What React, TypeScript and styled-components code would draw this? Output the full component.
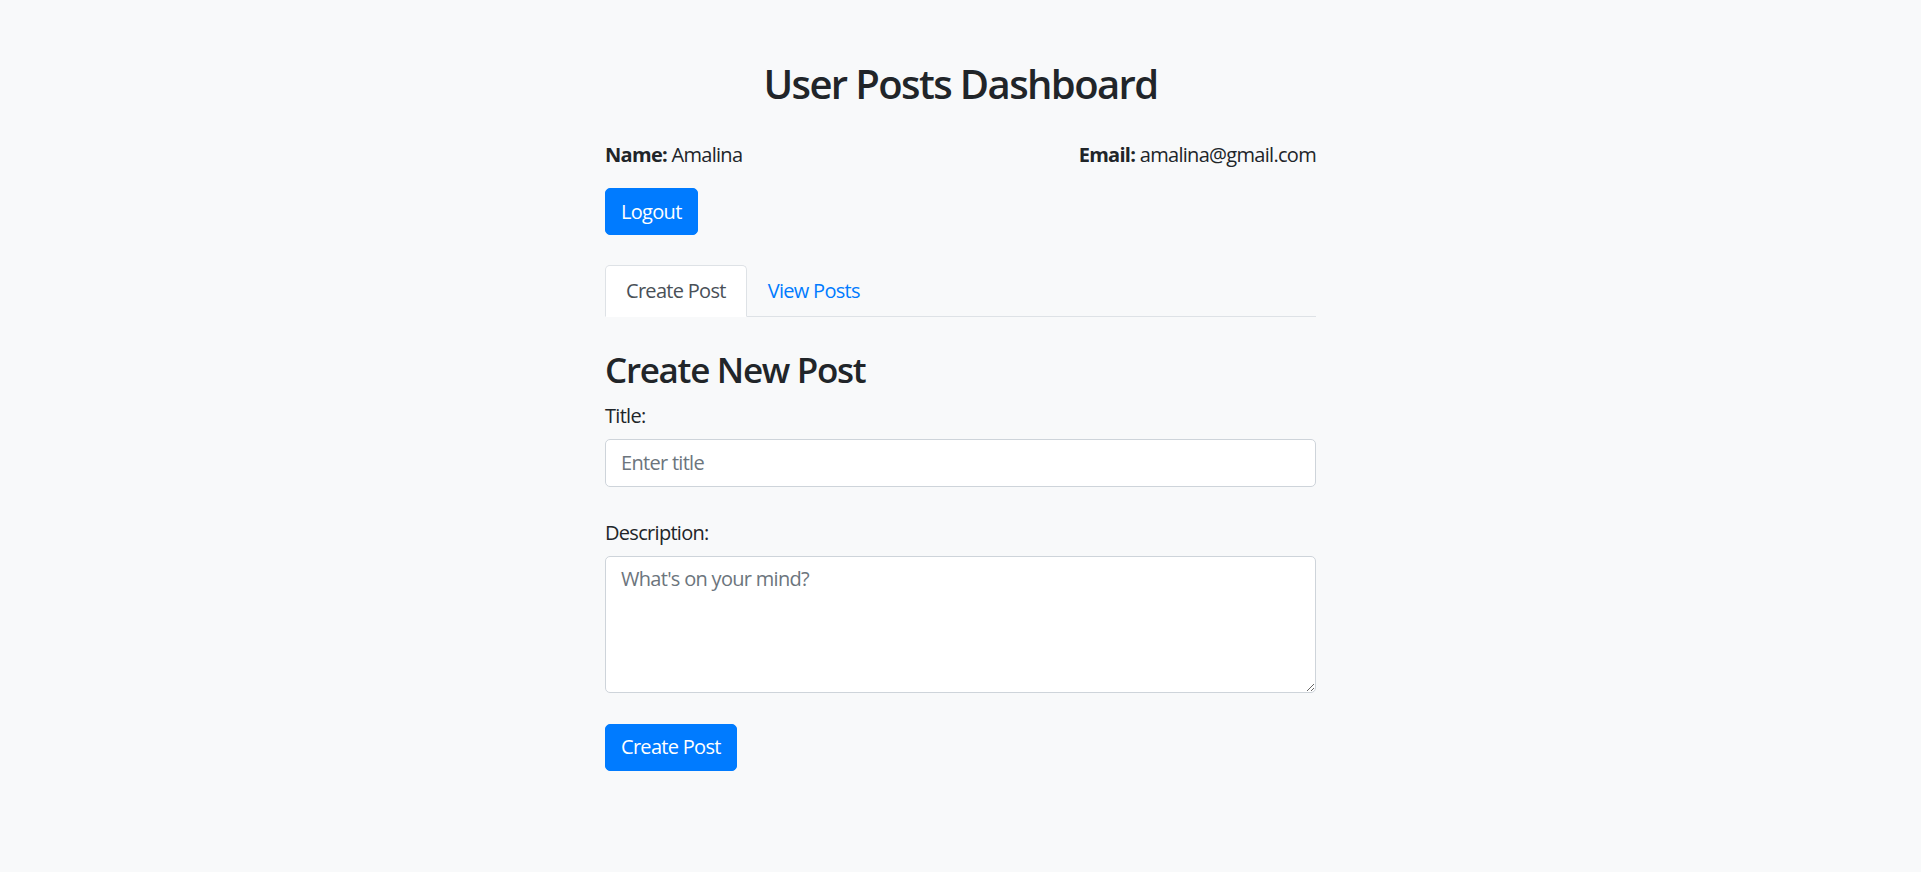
import React, { useState } from 'react'
import styled, { createGlobalStyle } from 'styled-components'

const GlobalStyle = createGlobalStyle`
  * {
    box-sizing: border-box;
  }
  body {
    margin: 0;
    background-color: #f8f9fa;
    color: #212529;
    font-family: 'Open Sans', 'Noto Sans', sans-serif;
    font-size: 20px;
    line-height: 1.5;
    letter-spacing: -0.035em;
  }
`

const Container = styled.div`
  width: 711px;
  margin: 0 auto;
  padding: 60px 0 40px;
`

const PageTitle = styled.h2`
  margin: 0 0 32px;
  text-align: center;
  font-size: 40px;
  font-weight: 600;
  line-height: 48px;
  letter-spacing: -0.04em;
`

const UserRow = styled.div`
  display: flex;
  justify-content: space-between;
  margin-bottom: 18px;
`

const Field = styled.span`
  white-space: nowrap;
`

const Strong = styled.strong`
  font-weight: 700;
`

const Button = styled.button`
  display: inline-block;
  padding: 7.5px 15px;
  border: 1px solid #007bff;
  border-radius: 5px;
  background-color: #007bff;
  color: #fff;
  font-family: inherit;
  font-size: 20px;
  line-height: 30px;
  letter-spacing: inherit;
  cursor: pointer;
`

const Tabs = styled.ul`
  display: flex;
  margin: 30px 0 0;
  padding: 0;
  list-style: none;
  border-bottom: 1px solid #dee2e6;
`

const TabItem = styled.li`
  margin-bottom: -1px;
`

const TabLink = styled.button<{ $active: boolean }>`
  display: block;
  padding: 10px 20px;
  border: 1px solid transparent;
  border-color: ${(p) => (p.$active ? '#dee2e6 #dee2e6 #fff' : 'transparent')};
  border-top-left-radius: 5px;
  border-top-right-radius: 5px;
  background-color: ${(p) => (p.$active ? '#fff' : 'transparent')};
  color: ${(p) => (p.$active ? '#495057' : '#007bff')};
  font-family: inherit;
  font-size: 20px;
  line-height: 30px;
  letter-spacing: inherit;
  cursor: pointer;
  outline: none;
`

const TabPanel = styled.div`
  padding-top: 32px;
`

const SectionTitle = styled.h3`
  margin: 0 0 10px;
  font-size: 35px;
  font-weight: 600;
  line-height: 42px;
  letter-spacing: -0.037em;
`

const FormGroup = styled.div`
  margin-bottom: 31px;
`

const Label = styled.label`
  display: block;
  margin-bottom: 8px;
`

const Input = styled.input`
  display: block;
  width: 100%;
  height: 47.5px;
  padding: 7.5px 15px;
  border: 1px solid #ced4da;
  border-radius: 5px;
  background-color: #fff;
  color: #495057;
  font-family: inherit;
  font-size: 20px;
  line-height: 30px;
  letter-spacing: inherit;

  &::placeholder {
    color: #6c757d;
  }
`

const TextArea = styled.textarea`
  display: block;
  width: 100%;
  height: 137px;
  padding: 7.5px 15px;
  border: 1px solid #ced4da;
  border-radius: 5px;
  background-color: #fff;
  color: #495057;
  font-family: inherit;
  font-size: 20px;
  line-height: 30px;
  letter-spacing: inherit;

  &::placeholder {
    color: #6c757d;
  }
`

const EmptyText = styled.p`
  margin: 0;
  color: #6c757d;
`

type Tab = 'create' | 'view'

export default function App() {
  const [tab, setTab] = useState<Tab>('create')
  const [title, setTitle] = useState('')
  const [description, setDescription] = useState('')

  return (
    <>
      <GlobalStyle />
      <Container>
        <PageTitle>User Posts Dashboard</PageTitle>
        <UserRow>
          <Field>
            <Strong>Name:</Strong> Amalina
          </Field>
          <Field>
            <Strong>Email:</Strong> amalina@gmail.com
          </Field>
        </UserRow>
        <Button type="button">Logout</Button>

        <Tabs>
          <TabItem>
            <TabLink $active={tab === 'create'} onClick={() => setTab('create')}>
              Create Post
            </TabLink>
          </TabItem>
          <TabItem>
            <TabLink $active={tab === 'view'} onClick={() => setTab('view')}>
              View Posts
            </TabLink>
          </TabItem>
        </Tabs>

        <TabPanel>
          {tab === 'create' ? (
            <form onSubmit={(e) => e.preventDefault()}>
              <SectionTitle>Create New Post</SectionTitle>
              <FormGroup>
                <Label htmlFor="post-title">Title:</Label>
                <Input
                  id="post-title"
                  placeholder="Enter title"
                  value={title}
                  onChange={(e) => setTitle(e.target.value)}
                />
              </FormGroup>
              <FormGroup>
                <Label htmlFor="post-description">Description:</Label>
                <TextArea
                  id="post-description"
                  placeholder="What's on your mind?"
                  value={description}
                  onChange={(e) => setDescription(e.target.value)}
                />
              </FormGroup>
              <Button type="submit">Create Post</Button>
            </form>
          ) : (
            <>
              <SectionTitle>Your Posts</SectionTitle>
              <EmptyText>No posts yet.</EmptyText>
            </>
          )}
        </TabPanel>
      </Container>
    </>
  )
}
